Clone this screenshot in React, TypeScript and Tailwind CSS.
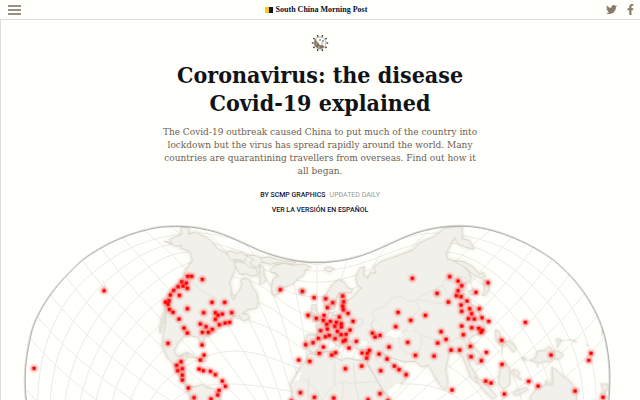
import React from "react";
import { FaFacebookF, FaTwitter } from "react-icons/fa";

type Point = [number, number];

const OUTLINE =
  "M80 575 C72 500 70 450 97 340 C125 265 170 205 247 135 C310 88 390 50 480 36 C570 28 630 42 690 66 L780 107 C830 126 890 142 950 142 C1020 142 1075 128 1130 104 L1190 77 C1260 42 1340 28 1410 34 C1500 42 1600 90 1660 135 C1740 200 1790 280 1813 360 C1832 440 1832 500 1824 575 Z";

// One half of the grid; the other half is its reflection.
const GRID = [
  "M113 575 C112 410 165 270 270 180 S460 65 570 55 S790 115 951 150",
  "M150 575 C155 400 230 270 340 180 S500 85 600 82 S800 165 951 168",
  "M194 575 C205 430 290 280 400 190 S560 108 650 112 S810 200 951 202",
  "M238 575 C260 430 350 290 460 205 S610 135 690 150 S830 243 951 246",
  "M284 575 C310 430 400 310 510 235 S660 175 740 195 S860 300 951 304",
  "M333 575 C360 440 450 340 550 280 S690 235 770 260 S880 352 951 356",
  "M385 575 C420 460 500 380 590 335 S740 310 810 340 S900 412 951 415",
  "M440 575 C480 500 550 440 650 415 S820 435 951 480",
  "M500 575 C580 490 700 490 951 545",
  "M80 525 L125 575",
  "M92 372 C160 450 230 510 315 575",
  "M112 305 C190 400 310 500 430 575",
  "M150 238 C230 340 370 470 540 575",
  "M195 180 C280 300 440 460 620 575",
  "M247 135 C340 270 500 410 690 575",
  "M300 95 C410 250 570 400 740 575",
  "M365 65 C480 190 640 370 780 575",
  "M430 45 C570 150 710 340 815 575",
  "M510 34 C660 140 780 330 850 575",
  "M610 42 C740 150 830 350 885 575",
  "M740 90 C830 200 870 400 915 575",
  "M860 133 C900 250 925 430 938 575",
];

const AMERICA_LAND = [
  "M42 78 L65 86 L58 74 L78 66 L95 58 L93 36 L116 38 L116 58 L138 50 L150 60 L172 68 L186 82 L205 103 L222 110 L238 126 L252 136 L256 160 L248 180 L238 204 L244 220 L243 244 L251 256 L258 240 L270 225 L276 208 L272 196 L286 190 L298 194 L308 218 L320 234 L324 258 L320 280 L292 284 L276 296 L292 298 L300 310 L278 318 L270 304 L250 303 L235 322 L210 334 L195 350 L178 358 L164 366 L159 376 L160 397 L152 385 L146 367 L125 363 L112 354 L96 370 L83 385 L72 407 L80 424 L98 419 L112 411 L116 421 L107 434 L98 440 L104 470 L102 498 L112 511 L126 516 L145 513 L157 508 L170 518 L190 521 L204 540 L216 575 L116 575 L121 550 L114 522 L96 498 L80 470 L72 447 L52 427 L37 394 L40 360 L47 328 L48 290 L41 313 L31 355 L29 342 L35 308 L44 287 L43 263 L58 240 L82 211 L99 192 L104 174 L116 154 L127 137 L123 115 L112 106 L92 100 L95 91 L76 94 L65 87 Z",
  "M228 112 L245 108 L260 116 L276 112 L292 125 L282 139 L261 133 L242 136 Z",
  "M288 120 L315 122 L342 132 L360 130 L354 145 L335 141 L320 158 L300 146 L310 134 Z",
  "M263 139 L285 145 L301 158 L318 160 L324 178 L307 184 L288 176 L270 178 L262 162 L252 147 Z",
  "M86 424 L104 416 L125 418 L142 430 L126 427 L110 422 Z",
  "M145 432 L163 430 L169 438 L150 440 Z",
];

const EURASIA_LAND = [
  // Greenland
  "M43 152 L72 145 L97 151 L130 147 L153 156 L134 166 L131 181 L111 192 L101 205 L78 215 L65 221 L51 240 L37 239 L35 215 L40 190 L56 184 L47 173 L36 173 L31 164 Z",
  "M0 129 L28 126 L50 133 L75 139 L110 140 L96 147 L50 142 L30 148 L8 140 Z",
  "M0 150 L12 160 L10 180 L18 194 L8 205 L0 208 Z",
  "M115 226 L124 220 L136 224 L134 234 L122 237 Z",
  "M192 160 L207 156 L223 162 L214 168 L204 171 Z",
  // British Isles
  "M156 270 L166 268 L166 284 L177 299 L184 314 L168 318 L158 319 L163 302 L156 290 Z",
  "M142 294 L152 293 L153 306 L142 311 Z",
  // Scandinavia
  "M194 275 L190 250 L205 228 L219 207 L236 194 L253 202 L265 220 L278 223 L273 235 L261 231 L247 238 L237 232 L228 250 L222 280 L214 283 L207 266 Z",
  // Eurasia
  "M134 392 L142 359 L173 361 L176 344 L166 333 L183 329 L189 316 L204 306 L207 291 L217 294 L217 303 L244 299 L251 283 L241 271 L239 250 L248 239 L259 258 L280 247 L294 227 L306 220 L291 208 L288 183 L300 160 L314 155 L309 179 L323 191 L331 174 L348 174 L342 155 L363 140 L398 128 L430 116 L460 105 L481 82 L520 66 L553 40 L604 34 L607 55 L605 71 L628 77 L642 102 L622 98 L595 88 L584 67 L570 92 L558 115 L562 132 L585 139 L607 151 L626 171 L632 190 L626 211 L638 220 L641 239 L628 229 L619 200 L606 212 L612 235 L600 251 L617 255 L644 274 L659 295 L666 315 L675 337 L661 355 L641 361 L625 373 L635 390 L664 420 L668 439 L651 450 L643 435 L620 416 L629 450 L650 483 L651 504 L632 487 L620 455 L609 427 L595 411 L568 408 L563 434 L556 461 L564 503 L556 526 L541 512 L524 485 L506 450 L485 456 L468 439 L432 440 L402 431 L382 424 L368 411 L391 444 L420 461 L447 476 L431 499 L404 517 L379 542 L366 520 L345 484 L322 444 L326 430 L338 414 L329 403 L300 405 L281 394 L275 378 L261 383 L267 402 L251 391 L243 371 L231 361 L217 355 L224 365 L243 384 L239 398 L221 381 L204 363 L184 374 L174 401 L160 414 Z",
  // Africa
  "M145 415 L169 420 L196 411 L220 409 L221 426 L245 437 L259 429 L297 437 L320 433 L322 449 L345 485 L372 535 L394 552 L388 575 L95 575 L97 525 L91 508 L108 480 L121 456 L138 438 Z",
  // Japan and the western Pacific
  "M579 137 L611 140 L640 157 L660 180 L670 172 L676 184 L662 189 L638 177 L619 160 L602 150 Z",
  "M668 193 L684 201 L688 219 L675 243 L666 240 L675 225 Z",
  "M626 232 L640 222 L648 237 L630 240 Z",
  "M706 344 L718 350 L721 371 L734 381 L726 395 L709 377 Z",
  "M643 485 L662 495 L686 517 L710 544 L698 552 L673 529 Z",
  "M722 449 L735 443 L748 463 L750 508 L729 523 L716 505 L718 479 Z",
];

const OCEANIA_LAND = [
  "M88 436 L107 429 L112 409 L136 406 L148 394 L160 410 L177 409 L189 421 L176 433 L156 428 L151 440 L132 438 L116 445 L102 439 Z",
  "M92 575 L91 546 L111 520 L134 512 L139 495 L141 509 L159 508 L156 456 L175 471 L190 486 L201 491 L228 521 L230 575 Z",
  "M169 371 L182 374 L179 387 L170 398 L174 387 Z",
  "M303 505 L316 510 L322 506 L324 520 L313 530 L315 548 L302 541 L310 525 Z",
  "M37 465 L47 463 L58 472 L53 481 L66 494 L54 491 L43 478 Z",
  "M55 527 L79 517 L84 525 L68 532 L48 542 L38 536 L54 525 Z",
  "M15 382 L26 378 L43 392 L48 402 L40 412 L30 398 Z",
  "M66 428 L76 427 L79 437 L69 433 Z",
];

// Seas and lakes enclosed by land.
const WATER = [
  "M1154 365 L1166 348 L1184 339 L1206 351 L1209 363 L1199 368 L1184 371 L1168 362 Z",
  "M1219 342 L1238 336 L1242 346 L1227 350 Z",
  "M1400 211 L1409 200 L1416 217 L1408 228 L1401 224 Z",
  "M1161 524 L1178 516 L1194 501 L1203 510 L1199 524 L1182 535 L1174 549 L1163 539 Z",
  "M1062 379 L1083 373 L1106 379 L1099 391 L1075 395 Z",
  "M875 514 L882 497 L894 477 L901 469 L911 472 L901 481 L899 496 L883 501 L881 515 Z",
];

const BORDERS = [
  "M555 180 L580 207 L610 230 L645 248 L660 265 L658 285 L675 290 L700 284 L720 300",
  "M544 177 L563 154 L580 138",
  "M504 304 L530 315 L550 350 L565 357",
  "M908 490 L946 521 L966 553 L1003 508 L1005 440",
  "M1003 508 L1035 500 L1061 507 M1061 446 L1065 503 L1137 500",
  "M926 486 L924 555 M1030 502 L1025 555 M1065 503 L1076 555",
  "M964 355 L985 371 L1004 361 L1021 369 M990 320 L985 343 L1005 350 L1025 333 L1021 306 M1032 305 L1045 328 L1038 351 L1061 356",
  "M1044 300 L1060 315 L1086 312 L1089 327 L1060 342",
  "M1132 319 L1116 300 L1120 285 L1149 275 L1170 255 L1184 246 L1205 245 L1224 258 L1245 258 L1262 282 L1240 301 L1248 315",
  "M1248 255 L1272 239 L1307 222 L1328 210 L1341 235 L1353 248 L1338 262 L1310 265 L1280 258 L1248 255",
  "M1328 210 L1335 192 L1361 202 L1375 182 L1398 190 L1409 204",
  "M1195 365 L1215 347 L1239 343 L1270 363 L1299 372 L1323 381 L1345 389 L1354 403",
  "M1195 365 L1202 397 L1221 414 L1252 421 L1265 387 L1262 361",
  "M1345 389 L1371 367 L1395 379 L1400 401 L1421 386 L1434 381",
  "M1145 385 L1152 406 M1123 430 L1145 447 L1158 456",
  "M1657 456 L1652 514",
];

const AMERICA_CASES: Point[] = [
  [113,184],[125,184],[157,193],[95,200],[109,204],[84,215],[99,213],[112,220],[71,226],[61,240],
  [88,241],[46,261],[57,257],[54,268],[58,283],[69,292],[112,281],[87,312],[102,339],[112,354],
  [54,385],[186,262],[224,262],[161,293],[196,293],[204,301],[217,297],[245,293],[196,313],[151,327],
  [168,335],[208,329],[225,324],[239,322],[157,352],[175,352],[187,343],[156,390],[162,420],[151,435],
  [93,440],[80,451],[97,461],[83,467],[97,480],[97,495],[147,462],[160,467],[181,469],[196,479],
  [217,498],[226,514],[207,526],[203,540],[115,519],[132,548],[183,552],
];

const EUROPE_CASES: Point[] = [
  [61,224],[127,229],[162,248],[197,251],[218,263],[202,278],[248,243],[251,260],[248,273],[250,284],
  [264,295],[144,301],[169,310],[192,301],[190,316],[211,319],[200,328],[229,322],[238,306],[244,326],
  [224,334],[244,336],[279,319],[202,342],[182,347],[232,349],[270,345],[243,359],[258,358],[208,361],
  [196,365],[175,370],[225,371],[250,379],[256,375],[159,383],[137,389],[190,396],[289,379],[267,399],
  [178,415],[215,420],[227,413],[116,435],[149,439],[256,461],[305,453],[306,414],[322,415],[328,406],
  [320,429],[121,533],[163,547],[221,549],[324,554],[94,558],[337,354],[345,366],[360,361],
];

const ASIA_CASES: Point[] = [
  [127,190],[239,185],[264,198],[275,212],[264,227],[201,235],[259,242],[273,245],[235,261],[291,258],
  [318,232],[354,203],[273,270],[275,289],[299,281],[328,281],[305,296],[295,311],[313,312],[336,308],
  [356,319],[84,292],[166,301],[122,316],[77,335],[275,333],[305,338],[326,340],[337,346],[333,352],
  [280,359],[213,350],[228,373],[203,384],[113,382],[57,396],[27,417],[51,432],[73,453],
  [87,464],[108,479],[32,467],[136,421],[192,423],[243,405],[269,405],[301,394],[349,412],[303,425],
  [334,437],[395,376],[396,448],[347,498],[363,504],[246,525],[403,537],[30,536],[54,557],
];

const PACIFIC_CASES: Point[] = [
  [76,322],[153,420],[273,415],[266,436],[86,499],[114,513],[225,528],[309,547],
];

const ISOLATED_CASES: Point[] = [[312,227],[102,460]];

function Cases({ points, offset }: { points: Point[]; offset: number }) {
  return (
    <g transform={`translate(${offset} 0)`}>
      {points.map(([x, y]) => (
        <circle key={`h${x}-${y}`} cx={x} cy={y} r="16" fill="url(#halo)" />
      ))}
      {points.map(([x, y]) => (
        <rect key={`d${x}-${y}`} x={x - 5} y={y - 5} width="10" height="10" fill="#fa0000" />
      ))}
    </g>
  );
}

function Land({ shapes, offset }: { shapes: string[]; offset: number }) {
  return (
    <g transform={`translate(${offset} 0)`}>
      {shapes.map((d) => (
        <path key={d} d={d} />
      ))}
    </g>
  );
}

function WorldMap() {
  return (
    <svg viewBox="0 0 1920 555" className="block w-full" role="img" aria-label="World map of Covid-19 cases">
      <defs>
        <clipPath id="globe">
          <path d={OUTLINE} />
        </clipPath>
        <radialGradient id="halo">
          <stop offset="0" stopColor="#ff0000" stopOpacity="0.46" />
          <stop offset="0.5" stopColor="#ff2020" stopOpacity="0.28" />
          <stop offset="1" stopColor="#ff4040" stopOpacity="0" />
        </radialGradient>
        <filter id="coast" x="-5%" y="-5%" width="110%" height="110%">
          <feDropShadow dx="0" dy="0" stdDeviation="6" floodColor="#c9bb9c" floodOpacity="0.5" />
        </filter>
      </defs>
      <g clipPath="url(#globe)">
        <g fill="none" stroke="#ebeae6" strokeWidth="3">
          {GRID.map((d) => (
            <path key={d} d={d} />
          ))}
          <g transform="translate(1902 0) scale(-1 1)">
            {GRID.map((d) => (
              <path key={d} d={d} />
            ))}
          </g>
          <path d="M951 142 V575" />
        </g>
        <g fill="#f2f0eb" stroke="#d0ccc0" strokeWidth="2" strokeLinejoin="round" filter="url(#coast)">
          <Land shapes={AMERICA_LAND} offset={450} />
          <Land shapes={EURASIA_LAND} offset={780} />
          <Land shapes={OCEANIA_LAND} offset={1500} />
        </g>
        <g fill="#fffffc" stroke="#d9d6cc" strokeWidth="1">
          {WATER.map((d) => (
            <path key={d} d={d} />
          ))}
        </g>
        <g fill="none" stroke="#dedbd3" strokeWidth="2" strokeLinejoin="round">
          {BORDERS.map((d) => (
            <path key={d} d={d} />
          ))}
          <path
            d="M1677 374 l12 4 l7 -3 M1700 376 l10 -2 l14 2 l5 -5 M1718 378 l15 4 M1758 386 l8 9 M1807 340 l-2 23 M310 198 v4 M313 207 l1 12 M1121 316 l-9 15 l14 20 l-2 20 M1565 428 l8 9 M1613 449 v9 M1506 391 v26"
            stroke="#c9c4b7"
          />
        </g>
      </g>
      <path d={OUTLINE} fill="none" stroke="#8c8b89" strokeWidth="3" />
      <Cases points={AMERICA_CASES} offset={450} />
      <Cases points={EUROPE_CASES} offset={780} />
      <Cases points={ASIA_CASES} offset={1110} />
      <Cases points={PACIFIC_CASES} offset={1500} />
      <Cases points={ISOLATED_CASES} offset={0} />
    </svg>
  );
}

function VirusIcon() {
  const spikes = [0, 36, 72, 108, 144, 180, 216, 252, 288, 324];
  return (
    <svg viewBox="0 0 36 36" className="size-[18px]" aria-hidden="true">
      <g stroke="#6d6155" strokeWidth="1.2" fill="#37302b">
        {spikes.map((a) => (
          <g key={a} transform={`rotate(${a + 18} 18 18)`}>
            <path d="M18 7 V3" />
            <circle cx="18" cy="3" r="1.6" stroke="none" />
          </g>
        ))}
      </g>
      <circle cx="18" cy="18" r="12" fill="#fff" stroke="#aba398" strokeWidth="1.5" />
      <path d="M10 9 A12 12 0 1 0 27 26 L22 21 L18 23 L15 18 L11 15 Z" fill="#81705c" />
      <g fill="#40372f">
        <circle cx="18" cy="12" r="1.5" />
        <circle cx="24" cy="14" r="1.6" />
        <circle cx="22" cy="18" r="1.2" />
      </g>
      <circle cx="11" cy="20" r="1.4" fill="#d1c8bb" />
      <circle cx="16" cy="26" r="1.6" fill="#d1c8bb" />
    </svg>
  );
}

export default function App() {
  return (
    <div className="h-screen overflow-hidden bg-[#fffffc] text-[#111317]">
      <header className="grid h-5 grid-cols-3 items-center border-b border-[#dddddb] pr-1 pl-2">
        <button type="button" aria-label="Menu" className="flex w-[13px] flex-col gap-[2px]">
          <span className="h-[2px] bg-[#9b8e84]" />
          <span className="h-[2px] bg-[#9b8e84]" />
          <span className="h-[2px] bg-[#9b8e84]" />
        </button>
        <a href="#home" className="flex items-center gap-[3px] justify-self-center pr-3 font-['Liberation_Serif',serif] text-[8px] leading-[10px] font-bold whitespace-nowrap text-[#071133]">
          <span className="flex h-[6px] w-2">
            <span className="flex-1 bg-[#ffca05]" />
            <span className="flex-1 bg-[#0b1538]" />
          </span>
          South China Morning Post
        </a>
        <nav className="flex items-center gap-2 justify-self-end text-[11px] text-[#8a7965]">
          <a href="#twitter" aria-label="Twitter"><FaTwitter /></a>
          <a href="#facebook" aria-label="Facebook"><FaFacebookF /></a>
        </nav>
      </header>
      <main className="h-full shadow-[inset_1px_0_0_#dddddb]">
        <div className="flex flex-col items-center pt-[14px] text-center">
          <VirusIcon />
          <h1 className="mt-[9px] max-w-[340px] font-['DejaVu_Serif_Condensed','DejaVu_Serif',serif] text-[23px] leading-7 font-bold">
            Coronavirus: the disease Covid-19 explained
          </h1>
          <p className="mt-2 max-w-[322px] font-['DejaVu_Serif_Condensed','DejaVu_Serif',serif] text-[10px] leading-[13px] text-[#6d6053]">
            The Covid-19 outbreak caused China to put much of the country into lockdown but the virus has spread rapidly around the world. Many countries are quarantining travellers from overseas. Find out how it all began.
          </p>
          <p className="mt-[13px] flex gap-1 font-[Roboto,sans-serif] text-[7px] leading-[10px] text-[#999]">
            <span className="font-medium text-[#111633]">BY SCMP GRAPHICS</span>
            <span>UPDATED DAILY</span>
          </p>
          <a href="#es" className="mt-[5px] font-[Roboto,sans-serif] text-[7px] leading-[10px] font-medium text-[#111633]">
            VER LA VERSIÓN EN ESPAÑOL
          </a>
        </div>
        <WorldMap />
      </main>
    </div>
  );
}
